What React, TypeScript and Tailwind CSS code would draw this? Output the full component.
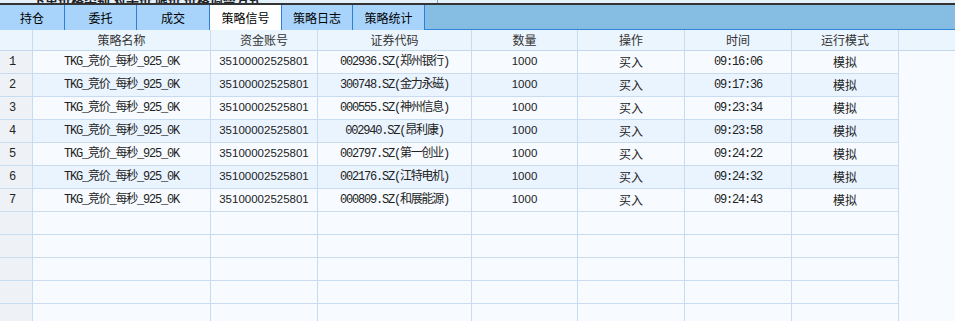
import React from 'react';

const tabs = [
  { label: '持仓', w: 'w-[65px]' },
  { label: '委托', w: 'w-[72px]' },
  { label: '成交', w: 'w-[73px]' },
  { label: '策略信号', w: 'w-[72px]', active: true },
  { label: '策略日志', w: 'w-[71px]' },
  { label: '策略统计', w: 'w-[72px]' },
];

const headers = ['', '策略名称', '资金账号', '证券代码', '数量', '操作', '时间', '运行模式', ''];

const rows = [
  ['002936.SZ(郑州银行)', '09:16:06'],
  ['300748.SZ(金力永磁)', '09:17:36'],
  ['000555.SZ(神州信息)', '09:23:34'],
  ['002940.SZ(昂利康)', '09:23:58'],
  ['002797.SZ(第一创业)', '09:24:22'],
  ['002176.SZ(江特电机)', '09:24:32'],
  ['000809.SZ(和展能源)', '09:24:43'],
];

const gridCols = 'grid grid-cols-[33px_178px_107px_154px_106px_107px_107px_107px_1fr]';
const mono = "font-['Liberation_Mono','Noto_Sans_CJK_SC',monospace] tracking-[-1.2px]";
const cjk = "font-['Noto_Sans_CJK_SC',sans-serif]";
const sans = "font-['Liberation_Sans','Noto_Sans_CJK_SC',sans-serif]";

export default function App() {
  return (
    <div className="w-[955px] h-[321px] overflow-hidden bg-[#f7fbff] text-[12px] text-[#222]">
      {/* clipped toolbar above */}
      <div className="h-[3px] overflow-hidden bg-[#e4f0fa] flex">
        <div className="w-[438px] border-r border-[#7aa6cc] relative">
          <span className={`absolute left-[32px] -top-[10px] font-bold text-[13px] ${cjk}`}>
            下单价格类别 对手价 限价   价格调整方式
          </span>
        </div>
        <div className="flex-1" />
      </div>
      <div className="h-[2px] bg-[#333]" />

      {/* tab bar */}
      <div className="h-[25px] bg-[#86bee3] border-b border-[#2f86e0] flex">
        {tabs.map((t) => (
          <div
            key={t.label}
            className={`${t.w} h-[25px] flex items-center justify-center border-r border-[#2b7fd6] ${cjk} text-[12px] text-black ${
              t.active ? 'bg-white' : 'bg-[#a8d4fb]'
            }`}
          >
            {t.label}
          </div>
        ))}
      </div>

      {/* header */}
      <div className={`${gridCols} h-[21px] bg-[#ebf5fe] border-b border-[#c5d9ec]`}>
        {headers.map((h, i) => (
          <div
            key={i}
            className={`flex items-center justify-center ${cjk} text-[#333] ${
              i < 8 ? 'border-r border-[#c9dcef]' : ''
            }`}
          >
            {h}
          </div>
        ))}
      </div>

      {/* data rows */}
      {rows.map(([code, time], idx) => {
        const bg = idx % 2 === 0 ? 'bg-[#f7fbff]' : 'bg-[#eaf4fe]';
        const cell = `h-[23px] flex items-center justify-center border-r border-b border-[#c9dcef] ${bg}`;
        return (
          <div key={idx} className={gridCols}>
            <div className={`h-[23px] flex items-center pl-[9px] border-r border-b border-[#c9dcef] bg-[#eef2f6] ${mono}`}>
              {idx + 1}
            </div>
            <div className={`${cell} ${mono}`}>TKG_竞价_每秒_925_0K</div>
            <div className={`${cell} ${sans} text-[11.5px]`}>35100002525801</div>
            <div className={`${cell} ${mono}`}>{code}</div>
            <div className={`${cell} ${sans} text-[11.5px]`}>1000</div>
            <div className={`${cell} ${cjk}`}>买入</div>
            <div className={`${cell} ${mono}`}>{time}</div>
            <div className={`${cell} ${cjk}`}>模拟</div>
            <div className="h-[23px] bg-[#f7fbff]" />
          </div>
        );
      })}

      {/* empty rows */}
      {[0, 1, 2, 3, 4, 5].map((r) => (
        <div key={r} className={gridCols}>
          <div className="h-[23px] border-r border-b border-[#c9dcef] bg-[#eef2f6]" />
          {[0, 1, 2, 3, 4, 5, 6].map((c) => (
            <div key={c} className="h-[23px] border-r border-b border-[#c9dcef] bg-[#f7fbff]" />
          ))}
          <div className="h-[23px]" />
        </div>
      ))}
    </div>
  );
}
